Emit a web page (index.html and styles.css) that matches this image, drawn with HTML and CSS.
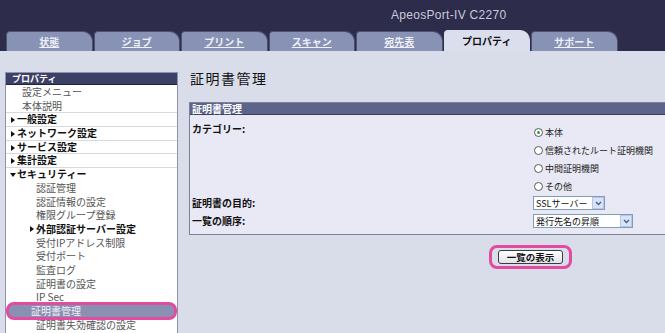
FILE: index.html
```html
<!DOCTYPE html>
<html lang="ja">
<head>
  <meta charset="UTF-8">
  <meta name="viewport" content="width=device-width, initial-scale=1.0">
  <title>証明書管理</title>
  <link rel="stylesheet" href="styles.css">
</head>
<body>
  <div class="header">
    <div class="model">ApeosPort-IV C2270</div>
    <div class="tabs">
      <a class="tab">状態</a>
      <a class="tab">ジョブ</a>
      <a class="tab">プリント</a>
      <a class="tab">スキャン</a>
      <a class="tab">宛先表</a>
      <a class="tab active">プロパティ</a>
      <a class="tab">サポート</a>
    </div>
  </div>

  <div class="page">
    <div class="sidebar">
      <div class="side-head">プロパティ</div>
      <div class="item">設定メニュー</div>
      <div class="item">本体説明</div>
      <div class="item group"><span class="arrow"></span>一般設定</div>
      <div class="item group"><span class="arrow"></span>ネットワーク設定</div>
      <div class="item group"><span class="arrow"></span>サービス設定</div>
      <div class="item group"><span class="arrow"></span>集計設定</div>
      <div class="item group"><span class="arrow down"></span>セキュリティー</div>
      <div class="item sub">認証管理</div>
      <div class="item sub">認証情報の設定</div>
      <div class="item sub">権限グループ登録</div>
      <div class="item sub strong"><span class="arrow"></span>外部認証サーバー設定</div>
      <div class="item sub">受付IPアドレス制限</div>
      <div class="item sub">受付ポート</div>
      <div class="item sub">監査ログ</div>
      <div class="item sub">証明書の設定</div>
      <div class="item sub">IP Sec</div>
      <div class="item current">証明書管理</div>
      <div class="item sub">証明書失効確認の設定</div>
    </div>

    <div class="main">
      <h1 class="title">証明書管理</h1>
      <div class="panel">
        <div class="panel-head">証明書管理</div>
        <div class="panel-body">
          <div class="row">
            <div class="label">カテゴリー:</div>
            <div class="radios">
              <div class="radio"><span class="dot on"></span>本体</div>
              <div class="radio"><span class="dot"></span>信頼されたルート証明機関</div>
              <div class="radio"><span class="dot"></span>中間証明機関</div>
              <div class="radio"><span class="dot"></span>その他</div>
            </div>
          </div>
          <div class="row field first">
            <div class="label">証明書の目的:</div>
            <div class="select w-ssl">
              <span>SSLサーバー</span>
              <span class="drop"><svg width="7" height="5" viewBox="0 0 7 5"><polyline points="1,1 3.5,3.5 6,1" fill="none" stroke="#4a5f8c" stroke-width="1.4"/></svg></span>
            </div>
          </div>
          <div class="row field">
            <div class="label">一覧の順序:</div>
            <div class="select w-order">
              <span>発行先名の昇順</span>
              <span class="drop"><svg width="7" height="5" viewBox="0 0 7 5"><polyline points="1,1 3.5,3.5 6,1" fill="none" stroke="#4a5f8c" stroke-width="1.4"/></svg></span>
            </div>
          </div>
        </div>
      </div>
      <div class="actions">
        <div class="mark">
          <button class="btn">一覧の表示</button>
        </div>
      </div>
    </div>
  </div>
</body>
</html>
```

FILE: styles.css
```css
html, body {
  margin: 0;
  padding: 0;
  height: 100%;
  overflow: hidden;
  background-color: #d9ddea;
  font-family: "Noto Sans CJK JP", "Noto Sans", sans-serif;
  font-size: 10px;
  color: #222;
}

.header {
  height: 51px;
  background-color: #2d2c4b;
  display: flex;
  flex-direction: column;
}

.model {
  height: 30px;
  line-height: 31px;
  padding-left: 391px;
  color: #c9cbdc;
  font-family: "Liberation Sans", sans-serif;
  font-size: 12px;
  letter-spacing: 0.3px;
}

.tabs {
  display: flex;
  align-items: flex-end;
  gap: 1px;
  height: 21px;
  padding-left: 6px;
}

.tab {
  width: 86.5px;
  height: 20px;
  box-sizing: border-box;
  background-color: #8892b4;
  border: 1px solid #4c5274;
  border-bottom: none;
  border-radius: 4px 10px 0 0;
  color: #eef0fa;
  font-weight: bold;
  text-decoration: underline;
  text-align: center;
  line-height: 19px;
}

.tab.active {
  height: 21px;
  background-color: #dbdfed;
  border-color: #dbdfed;
  color: #111;
  text-decoration: none;
}

.page {
  display: flex;
  align-items: flex-start;
  height: 265px;
  overflow: hidden;
  padding: 17px 0 0 5px;
}

.sidebar {
  width: 173px;
  flex-shrink: 0;
  box-sizing: border-box;
  margin-top: 4px;
  min-height: 270px;
  background-color: #fff;
  border: 1px solid #8e94ad;
}

.side-head {
  height: 11px;
  line-height: 11px;
  padding-left: 6px;
  background-color: #3c4067;
  border-bottom: 1px solid #1f2140;
  color: #fff;
  font-size: 9px;
  font-weight: bold;
}

.item {
  position: relative;
  height: 13.7px;
  line-height: 13.7px;
  box-sizing: border-box;
  padding-left: 16px;
  color: #555;
  white-space: nowrap;
}

.item.group {
  padding-left: 11px;
  border-top: 1px solid #d8d8e0;
  line-height: 12.7px;
  color: #111;
  font-weight: bold;
}

.item.sub {
  padding-left: 30px;
}

.item.strong {
  color: #111;
  font-weight: bold;
}

.arrow {
  position: absolute;
  left: 5px;
  top: 4px;
  width: 0;
  height: 0;
  border-top: 3px solid transparent;
  border-bottom: 3px solid transparent;
  border-left: 4px solid #111;
}

.arrow.down {
  left: 4px;
  top: 5px;
  border-left: 3px solid transparent;
  border-right: 3px solid transparent;
  border-top: 4px solid #111;
  border-bottom: none;
}

.item.strong .arrow {
  left: 24px;
}

.item.current {
  margin: 0 1px;
  padding-left: 24px;
  border-radius: 7px;
  background-color: #8891b1;
  color: #f2f3f9;
}

.item.current::after {
  content: "";
  position: absolute;
  left: -1px;
  right: -1px;
  top: -2px;
  bottom: -2px;
  border: 3px solid #e24b9f;
  border-radius: 8px;
}

.main {
  flex: 1;
  margin-left: 11px;
}

.title {
  margin: 0;
  padding-left: 1px;
  font-size: 14px;
  font-weight: normal;
  line-height: 20px;
  letter-spacing: 1.5px;
  color: #111;
}

.panel {
  margin-top: 14px;
  margin-right: -20px;
  border: 1px solid #7d829c;
  background-color: #e9e9f5;
}

.panel-head {
  height: 11px;
  line-height: 11px;
  padding-left: 2px;
  background-color: #5c6489;
  border-bottom: 1px solid #3a3f5e;
  color: #fff;
  font-weight: bold;
}

.panel-body {
  padding: 7px 0 6px 2px;
}

.row {
  display: flex;
}

.row.field {
  align-items: center;
  height: 14px;
  margin-top: 4px;
}

.row.field.first {
  margin-top: 1px;
}

.label {
  width: 341px;
  line-height: 14px;
  font-weight: bold;
  color: #111;
}

.radios {
  padding-top: 1px;
}

.radio {
  display: flex;
  align-items: center;
  gap: 2px;
  height: 18px;
  font-size: 9px;
  color: #222;
}

.dot {
  position: relative;
  width: 9px;
  height: 9px;
  margin-left: 1px;
  box-sizing: border-box;
  border: 1px solid #5a5a5a;
  border-radius: 50%;
  background-color: #fff;
}

.dot.on::after {
  content: "";
  position: absolute;
  left: 2px;
  top: 2px;
  width: 3px;
  height: 3px;
  border-radius: 50%;
  background-color: #2ea33a;
}

.select {
  display: flex;
  align-items: center;
  justify-content: space-between;
  height: 14px;
  box-sizing: border-box;
  padding-left: 2px;
  border: 1px solid #7f9db9;
  background-color: #fff;
  font-size: 9px;
  color: #111;
}

.w-ssl {
  width: 72px;
}

.w-order {
  width: 100px;
}

.drop {
  display: flex;
  align-items: center;
  justify-content: center;
  width: 12px;
  height: 12px;
  box-sizing: border-box;
  background-color: #d8e3f7;
  border: 1px solid #b5c6e6;
}

.actions {
  display: flex;
  padding: 10px 0 0 300px;
}

.mark {
  border: 3px solid #e24b9f;
  border-radius: 8px;
  padding: 2px 6px;
}

.btn {
  display: block;
  width: 65px;
  height: 14px;
  padding: 0;
  box-sizing: border-box;
  border: 1px solid #3b3b3b;
  border-radius: 3px;
  background: linear-gradient(#ffffff, #e2e3ea);
  font-family: inherit;
  font-size: 9.5px;
  font-weight: bold;
  line-height: 12px;
  color: #111;
}
```
